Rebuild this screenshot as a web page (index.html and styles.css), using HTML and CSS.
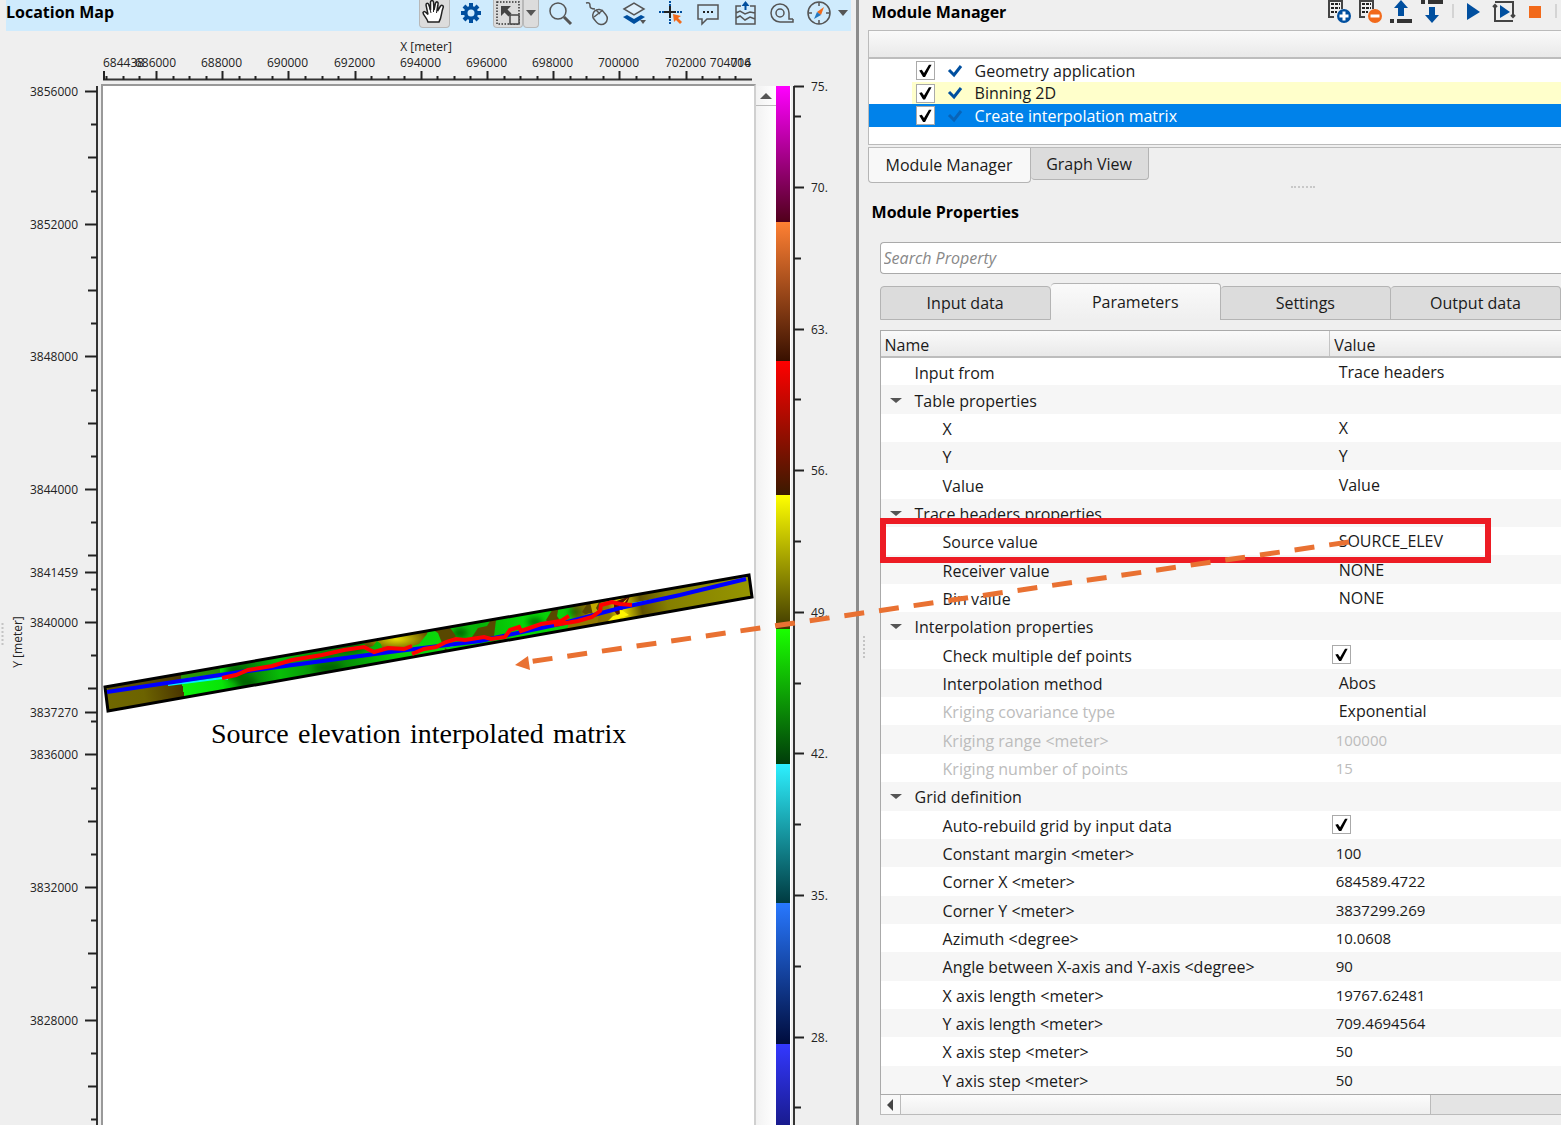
FILE: index.html
```html
<!DOCTYPE html>
<html lang="en">
<head>
    <meta charset="UTF-8">
    <meta name="viewport" content="width=device-width, initial-scale=1.0">
    <title>Location Map</title>
    <link rel="stylesheet" href="styles.css">
</head>
<body>

<div class="app">
    <!-- Location map -->
    <section class="map-panel">
        <div class="map-header">
            <h2>Location Map</h2>
            <div class="map-tools">
                <button class="tool pressed" aria-label="Pan">
                    <svg width="28" height="28" viewBox="0 0 28 28"><path d="M8 23 C7 19 3 16 3 13.500 C4 11.500 6 13 8 15.500 L6 6 C6 3.500 8 3.500 9 6 L10.500 11 L10.500 3 C11 1 13 1 13.500 3 L14 11 L15.500 4 C16.500 2 18.500 3 18 5 L17.500 12 L20.500 7 C22 5.500 24 7 23 9 C21 14 22 18 19 23 Z" fill="#fff" stroke="#222" stroke-width="1.500"/><path d="M9 6l2 8M13.500 4v9M17.500 6l-1 8" stroke="#222" fill="none"/></svg>
                </button>
                <button class="tool" aria-label="Settings">
                    <svg width="24" height="24" viewBox="0 0 24 24"><g stroke="#004f9f" stroke-width="4"><path d="M12 2v20M2 12h20M5 5l14 14M19 5L5 19"/></g><circle cx="12" cy="12" r="7" fill="#004f9f"/><circle cx="12" cy="12" r="3.500" fill="#cfebfd"/></svg>
                </button>
                <button class="tool pressed select-tool" aria-label="Select">
                    <svg width="26" height="26" viewBox="0 0 26 26"><rect x="2" y="2" width="22" height="22" fill="none" stroke="#333" stroke-width="1.500" stroke-dasharray="1.500 1.500"/><path d="M6 6h10l-3.500 3.500 4 4-3 3-4-4L6 16z" fill="#444"/><rect x="15" y="15" width="9" height="9" fill="#ddd" stroke="#444" stroke-width="1.500"/></svg>
                </button>
                <button class="tool pressed drop" aria-label="Select options">
                    <svg width="12" height="8" viewBox="0 0 12 8"><path d="M1 1h10L6 7z" fill="#555"/></svg>
                </button>
                <button class="tool" aria-label="Zoom">
                    <svg width="26" height="26" viewBox="0 0 26 26" fill="none" stroke="#555"><circle cx="11" cy="11" r="8" stroke-width="1.500"/><path d="M17 17l7 7" stroke-width="3"/></svg>
                </button>
                <button class="tool" aria-label="Mouse">
                    <svg width="26" height="26" viewBox="0 0 26 26" fill="none" stroke="#555" stroke-width="1.500"><path d="M2 3c4-1 4 1 4 3s2 3 5 3"/><rect x="10" y="9" width="12" height="16" rx="6" transform="rotate(-40 16 17)"/><path d="M10 17l9-7M12 10l4 4"/></svg>
                </button>
                <button class="tool" aria-label="Layers">
                    <svg width="26" height="26" viewBox="0 0 26 26"><path d="M2 17l4-2 7 4 7-4 4 2-11 7z" fill="#004f9f"/><path d="M3 9l10-6 10 6-10 6z" fill="#dff1fd" stroke="#555" stroke-width="1.500"/><path d="M19 20h6l-3 4z" fill="#555"/></svg>
                </button>
                <button class="tool" aria-label="Pick point">
                    <svg width="26" height="26" viewBox="0 0 26 26"><path d="M12 1v24M1 12h24" stroke="#004f9f" stroke-width="2" stroke-dasharray="2 1"/><path d="M12 6v12M6 12h12" stroke="#222" stroke-width="2"/><path d="M15 14l8 2-3 2 4 4-2 2-4-4-2 2z" fill="#f26a1b"/></svg>
                </button>
                <button class="tool" aria-label="Comment">
                    <svg width="26" height="26" viewBox="0 0 26 26"><path d="M3 5h20v14H12l-5 5v-5H3z" fill="none" stroke="#555" stroke-width="1.500"/><path d="M8 11h2v2H8zM12 11h2v2h-2zM16 11h2v2h-2z" fill="#222"/></svg>
                </button>
                <button class="tool" aria-label="Export map">
                    <svg width="26" height="26" viewBox="0 0 26 26" fill="none" stroke="#555" stroke-width="1.500"><path d="M9 6H4v18h19V6h-5M4 13l4-2 5 3 5-2 5 1M4 18l4-2 5 4 5-3 5 2"/><path d="M13.500 1l4 5h-3v4h-2V6h-3z" fill="#004f9f" stroke="none"/></svg>
                </button>
                <button class="tool" aria-label="Measure">
                    <svg width="26" height="26" viewBox="0 0 26 26" fill="none" stroke="#555" stroke-width="1.500"><path d="M24 19v3H11a9 9 0 1 1 9-9v6h4"/><circle cx="11" cy="13" r="4"/></svg>
                </button>
                <button class="tool compass" aria-label="Compass">
                    <svg width="26" height="26" viewBox="0 0 26 26"><circle cx="13" cy="13" r="11" fill="none" stroke="#555" stroke-width="1.500"/><path d="M13 2v4M13 20v4M2 13h4M20 13h4" stroke="#555" stroke-width="1.500"/><path d="M18 7l-3 8-4-3z" fill="#f26a1b"/><path d="M8 19l3-7 4 3z" fill="#2478c0"/></svg>
                </button>
                <button class="tool drop last" aria-label="Compass options">
                    <svg width="12" height="8" viewBox="0 0 12 8"><path d="M1 1h10L6 7z" fill="#555"/></svg>
                </button>
            </div>
        </div>

        <div class="map-body">
            <svg class="x-axis" aria-label="X axis">
                <g id="xAxis" transform="translate(-101 -31)">
                    <text x="426" y="51" text-anchor="middle">X [meter]</text>
                    <path d="M103 79.500H752" class="axis-line"/>
                </g>
            </svg>
            <svg class="y-axis" aria-label="Y axis">
                <g id="yAxis" transform="translate(0 -84)">
                    <text transform="translate(22 642) rotate(-90)" text-anchor="middle">Y [meter]</text>
                    <path d="M97 86V3000" class="axis-line"/>
                    <path d="M2.500 623v24" class="grip"/>
                </g>
            </svg>
            <div class="plot">
                <svg>
                    <defs>
                        <clipPath id="band"><path d="M105 687L749 575l3 22L108 711z"/></clipPath>
                        <linearGradient id="bandFill" gradientUnits="userSpaceOnUse" x1="105" y1="700" x2="751" y2="586">
                            <stop offset="0" stop-color="#706800"/>
                            <stop offset=".06" stop-color="#6c6300"/>
                            <stop offset=".12" stop-color="#4a3500"/>
                            <stop offset=".12" stop-color="#0cf20c"/>
                            <stop offset=".18" stop-color="#08e408"/>
                            <stop offset=".22" stop-color="#077a07"/>
                            <stop offset=".27" stop-color="#08bd08"/>
                            <stop offset=".35" stop-color="#087f08"/>
                            <stop offset=".4" stop-color="#06a506"/>
                            <stop offset=".45" stop-color="#08cf08"/>
                            <stop offset=".53" stop-color="#0bd90b"/>
                            <stop offset=".58" stop-color="#08b108"/>
                            <stop offset=".65" stop-color="#06d906"/>
                            <stop offset=".72" stop-color="#0bcd0b"/>
                            <stop offset=".73" stop-color="#776800"/>
                            <stop offset=".78" stop-color="#8c7600"/>
                            <stop offset=".8" stop-color="#eee200"/>
                            <stop offset=".83" stop-color="#605200"/>
                            <stop offset=".87" stop-color="#857f00"/>
                            <stop offset="1" stop-color="#969600"/>
                        </linearGradient>
                        <radialGradient id="hill"><stop offset="0" stop-color="#e8e000"/><stop offset="1" stop-color="#665300"/></radialGradient>
                        <filter id="soft"><feGaussianBlur stdDeviation="3"/></filter>
                    </defs>
                    <g transform="translate(-103 -86)">
                        <g clip-path="url(#band)">
                            <path d="M105 687L749 575l3 22L108 711z" fill="url(#bandFill)"/>
                            <g filter="url(#soft)" fill="#036503">
                                <ellipse cx="236" cy="672" rx="10" ry="8"/><ellipse cx="247" cy="683" rx="9" ry="6"/>
                                <ellipse cx="350" cy="648" rx="14" ry="5"/><ellipse cx="328" cy="668" rx="15" ry="5"/>
                                <ellipse cx="460" cy="633" rx="8" ry="5"/><ellipse cx="535" cy="622" rx="8" ry="4"/>
                                <ellipse cx="575" cy="612" rx="7" ry="3"/>
                            </g>
                            <path d="M364 643l3 5 6-2 4-5 4 3 2 7 12-1 14-3 10-3 8-10 2-7-45 7z" fill="url(#hill)"/>
                            <g fill="#594800">
                                <path d="M430 628l8 5 4 10 8-1 6-6-5-7-5-5zM472 637l6-9 9-2 5-8 4 2-2 16-10 3zM546 620l8-13 5-2-2 11 4 6-10 4zM582 612l7-11 12-3-1 10-11 9zM445 648l6 4 12-2 8 6-28 4z"/>
                            </g>
                            <path d="M569 622l20-9 10 1-2 12-30 4z" fill="#927a00"/>
                            <path d="M590 602l10-2-4 8 3 5-6 2z" fill="#c0a900"/>
                            <path d="M614 602l16-6-3 7-9 13-4-5z" fill="#5b1500"/>
                            <path d="M628 598l-8 11 9 6-9 3-5 7-8-3 6-6 7-2-1-8z" fill="#fff300"/>
                            <path d="M108 689L190 675l30-4" stroke="#4a3b00" stroke-width="5" opacity=".5"/>
                        </g>
                        <path d="M105 687L749 575l3 22L108 711z" fill="none" stroke="#000" stroke-width="3"/>
                        <path d="M168 685l55-7 5 1M450 646l25-6M560 624l15-4M632 604l50-9" stroke="#00f0ff" stroke-width="2" fill="none"/>
                        <path d="M107 692L240 672 390 652 480 641 560 624 620 608 680 595 746 579" fill="none" stroke="#00f" stroke-width="4"/>
                        <path d="M222 678l14-3 12-5 24-4 20-6 30-5 22-5 20-3 10 5 14-4 16 1 8-3M412 654l12-5 12-2 10-5 10-3 9 1 19-3 7 2 14-2 5-7 9-3 2 4 20-7 20-3 8-5M554 625l12-2 12-2 14-4 8-6 1-6 11-3 8 2 12 1" fill="none" stroke="#f00" stroke-width="4"/>
                        <text class="caption" x="211" y="743">Source&emsp13;elevation&emsp13;interpolated&emsp13;matrix</text>
                    </g>
                </svg>
            </div>
            <div class="v-scroll">
                <button aria-label="Scroll up"><svg width="12" height="6" viewBox="0 0 12 6"><path d="M0 6L6 0l6 6z" fill="#555"/></svg></button>
            </div>
            <div class="color-bar">
                <div class="band-magenta"></div>
                <div class="band-orange"></div>
                <div class="band-red"></div>
                <div class="band-yellow"></div>
                <div class="band-green"></div>
                <div class="band-cyan"></div>
                <div class="band-blue"></div>
                <div class="band-indigo"></div>
            </div>
            <svg class="color-scale" aria-label="Elevation scale">
                <g id="colorScale" transform="translate(-791 -84)">
                    <path d="M794 86V3000" class="axis-line"/>
                </g>
            </svg>
        </div>
    </section>

    <!-- Modules -->
    <section class="side-panel">
        <div class="side-header">
            <h2>Module Manager</h2>
            <div class="module-tools">
                <button aria-label="Add module"><svg width="24" height="24" viewBox="0 0 24 24"><path d="M7 17H2V1h13v8" fill="none" stroke="#444" stroke-width="2"/><path d="M4 4h9M4 8h9M4 12h6" stroke="#222" stroke-width="2" stroke-dasharray="3 1"/><circle cx="17" cy="16" r="7" fill="#004f9f"/><path d="M12.500 16h9M17 11.500v9" stroke="#fff" stroke-width="3"/></svg></button>
                <button aria-label="Remove module"><svg width="24" height="24" viewBox="0 0 24 24"><path d="M7 17H2V1h13v8" fill="none" stroke="#444" stroke-width="2"/><path d="M4 4h9M4 8h9M4 12h6" stroke="#222" stroke-width="2" stroke-dasharray="3 1"/><circle cx="17" cy="16" r="7" fill="#f26a1b"/><path d="M12.500 16h9" stroke="#fff" stroke-width="3"/></svg></button>
                <button aria-label="Move up"><svg width="24" height="24" viewBox="0 0 24 24"><path d="M12 0l7 8h-4v8H9V8H5z" fill="#004f9f"/><path d="M1 19h4v4H1zM8 19h15v4H8z" fill="#333"/></svg></button>
                <button aria-label="Move down"><svg width="24" height="24" viewBox="0 0 24 24"><path d="M12 23l7-8h-4V7H9v8H5z" fill="#004f9f"/><path d="M1 0h4v4H1zM8 0h15v4H8z" fill="#333"/></svg></button>
                <span class="separator"></span>
                <button aria-label="Run"><svg width="24" height="24" viewBox="0 0 24 24"><path d="M6 3l13 9-13 8z" fill="#004f9f"/></svg></button>
                <button aria-label="Run flow"><svg width="24" height="24" viewBox="0 0 24 24"><path d="M1 7l2-2 2 2M19 15l2 2 2-2" fill="none" stroke="#444" stroke-width="2"/><path d="M3 2h18v14M3 6v15h18" fill="none" stroke="#444" stroke-width="2"/><path d="M8 5l10 7-10 6z" fill="#004f9f"/></svg></button>
                <button aria-label="Stop"><svg width="24" height="24" viewBox="0 0 24 24"><path d="M6 6h12v12H6z" fill="#f26a1b"/></svg></button>
                <span class="separator"></span>
            </div>
        </div>

        <div class="module-list">
            <div class="list-header"></div>
            <label class="module"><input type="checkbox" checked><svg class="done" width="16" height="14" viewBox="0 0 16 14"><path d="M2 6l5 5 7-9" /></svg>Geometry application</label>
            <label class="module warm"><input type="checkbox" checked><svg class="done" width="16" height="14" viewBox="0 0 16 14"><path d="M2 6l5 5 7-9" /></svg>Binning 2D</label>
            <label class="module selected"><input type="checkbox" checked><svg class="done" width="16" height="14" viewBox="0 0 16 14"><path d="M2 6l5 5 7-9" /></svg>Create interpolation matrix</label>
        </div>
        <div class="view-tabs">
            <button class="active">Module Manager</button>
            <button>Graph View</button>
        </div>
        <div class="splitter"></div>

        <h2 class="properties-title">Module Properties</h2>
        <div class="properties">
            <input type="text" class="search" placeholder="Search Property" aria-label="Search Property">
            <div class="property-tabs">
                <button>Input data</button>
                <button class="active">Parameters</button>
                <button>Settings</button>
                <button>Output data</button>
            </div>
            <div class="table-wrap">
                <table>
                    <thead>
                        <tr><th>Name</th><th>Value</th></tr>
                    </thead>
                    <tbody>
                        <tr><td>Input from</td><td>Trace headers</td></tr>
                        <tr class="group"><td>Table properties</td><td></td></tr>
                        <tr class="child"><td>X</td><td>X</td></tr>
                        <tr class="child"><td>Y</td><td>Y</td></tr>
                        <tr class="child"><td>Value</td><td>Value</td></tr>
                        <tr class="group"><td>Trace headers properties</td><td></td></tr>
                        <tr class="child"><td>Source value</td><td>SOURCE_ELEV</td></tr>
                        <tr class="child"><td>Receiver value</td><td>NONE</td></tr>
                        <tr class="child"><td>Bin value</td><td>NONE</td></tr>
                        <tr class="group"><td>Interpolation properties</td><td></td></tr>
                        <tr class="child check"><td><label for="multiple">Check multiple def points</label></td><td><input type="checkbox" id="multiple" checked></td></tr>
                        <tr class="child"><td>Interpolation method</td><td>Abos</td></tr>
                        <tr class="child off"><td>Kriging covariance type</td><td class="on">Exponential</td></tr>
                        <tr class="child off number"><td>Kriging range &lt;meter&gt;</td><td>100000</td></tr>
                        <tr class="child off number"><td>Kriging number of points</td><td>15</td></tr>
                        <tr class="group"><td>Grid definition</td><td></td></tr>
                        <tr class="child check"><td><label for="rebuild">Auto-rebuild grid by input data</label></td><td><input type="checkbox" id="rebuild" checked></td></tr>
                        <tr class="child number"><td>Constant margin &lt;meter&gt;</td><td>100</td></tr>
                        <tr class="child number"><td>Corner X &lt;meter&gt;</td><td>684589.4722</td></tr>
                        <tr class="child number"><td>Corner Y &lt;meter&gt;</td><td>3837299.269</td></tr>
                        <tr class="child number"><td>Azimuth &lt;degree&gt;</td><td>10.0608</td></tr>
                        <tr class="child number"><td>Angle between X-axis and Y-axis &lt;degree&gt;</td><td>90</td></tr>
                        <tr class="child number"><td>X axis length &lt;meter&gt;</td><td>19767.62481</td></tr>
                        <tr class="child number"><td>Y axis length &lt;meter&gt;</td><td>709.4694564</td></tr>
                        <tr class="child number"><td>X axis step &lt;meter&gt;</td><td>50</td></tr>
                        <tr class="child number"><td>Y axis step &lt;meter&gt;</td><td>50</td></tr>
                    </tbody>
                </table>
            </div>
            <div class="h-scroll">
                <button aria-label="Scroll left"><svg width="6" height="12" viewBox="0 0 6 12"><path d="M6 0L0 6l6 6z" fill="#444"/></svg></button>
                <div class="thumb"></div>
            </div>
        </div>
    </section>

    <!-- Callout from the source value to the map -->
    <svg class="callout">
        <rect x="883" y="521" width="605" height="39" fill="none" stroke="#ed1c24" stroke-width="6"/>
        <path d="M1349 542L531 661.500" stroke="#e97132" stroke-width="5" stroke-dasharray="20 15"/>
        <path d="M515 665l13-9 2 14z" fill="#e97132"/>
        <path d="M864 636v24" class="grip"/>
    </svg>
</div>

<script>
    var SVG_NS = "http://www.w3.org/2000/svg";

    function addLine(parent, x1, y1, x2, y2) {
        var line = document.createElementNS(SVG_NS, "path");
        line.setAttribute("d", "M" + x1 + " " + y1 + "L" + x2 + " " + y2);
        line.setAttribute("class", "tick");
        parent.appendChild(line);
    }

    function addLabel(parent, text, x, y, anchor) {
        var label = document.createElementNS(SVG_NS, "text");
        label.setAttribute("x", x);
        label.setAttribute("y", y);
        label.setAttribute("text-anchor", anchor);
        label.textContent = text;
        parent.appendChild(label);
    }

    // X axis: a label every 2000 m, four steps between labels
    var xAxis = document.getElementById("xAxis");
    for (var i = -3; i <= 35; i++) {
        var x = Math.round(156 + i * 16.55) + 0.5;
        addLine(xAxis, x, i % 4 === 0 ? 71 : 76, x, 80);
        if (i % 4 === 0) {
            addLabel(xAxis, 686000 + i * 500, x - 1, 67, "middle");
        }
    }
    addLine(xAxis, 104, 71, 104, 80);
    addLabel(xAxis, "684438", 103, 67, "start");
    addLabel(xAxis, "704016", 751, 67, "end");
    addLabel(xAxis, "704", 751, 67, "end");

    // Y axis: a label every 4000 m
    var yAxis = document.getElementById("yAxis");
    for (var j = 0; j < 32; j++) {
        var y = Math.round(91 + j * 33.17) + 0.5;
        addLine(yAxis, j % 4 === 0 ? 85 : j % 2 === 0 ? 88 : 91, y, 97, y);
        if (j % 4 === 0) {
            addLabel(yAxis, 3856000 - j * 1000, 78, y + 4, "end");
        }
    }
    [[3841459, 572.5], [3837270, 712.5]].forEach(function (mark) {
        addLine(yAxis, 85, mark[1], 97, mark[1]);
        addLabel(yAxis, mark[0], 78, mark[1] + 4, "end");
    });

    // Colour scale
    var colorScale = document.getElementById("colorScale");
    addLine(colorScale, 794, 86.5, 804, 86.5);
    addLabel(colorScale, "75.", 811, 91, "start");
    addLine(colorScale, 794, 116.5, 801, 116.5);
    for (var k = 0; k < 14; k++) {
        var s = Math.round(187 + k * 70.8) + 0.5;
        addLine(colorScale, 794, s, k % 2 === 0 ? 804 : 801, s);
        if (k % 2 === 0) {
            addLabel(colorScale, (70 - k * 3.5) + ".", 811, s + 4, "start");
        }
    }
</script>

</body>
</html>
```
FILE: styles.css
```css
* {
    box-sizing: border-box;
}
body {
    margin: 0;
    background-color: #efefef;
    color: #1a1a1a;
    font-family: "Open Sans", "Noto Sans", sans-serif;
    font-size: 16px;
}
button {
    font: inherit;
    color: inherit;
    padding: 0;
    border: none;
    background: none;
}
h2 {
    margin: 0;
    font-size: 16px;
    line-height: 24px;
    color: #000;
}
svg {
    display: block;
}
.app {
    position: relative;
    display: grid;
    grid-template-columns: 55fr 45fr;
    height: 100vh;
    min-height: 900px;
    overflow: hidden;
}

/* Map */
.map-panel {
    display: flex;
    flex-direction: column;
    min-width: 0;
    min-height: 0;
    border-right: 3px solid #8c8c8c;
}
.map-header {
    display: flex;
    justify-content: space-between;
    height: 31px;
    margin: 0 5px 0 6px;
    background-color: #cfebfd;
}
.map-tools {
    display: flex;
}
.tool {
    display: flex;
    align-items: center;
    justify-content: center;
    width: 31px;
    height: 28px;
    margin-right: 6px;
    padding-bottom: 2px;
}
.tool.pressed {
    background-color: #dcdcdc;
    border: 1px solid #b8b8b8;
    border-top: none;
    border-radius: 0 0 4px 4px;
}
.tool.select-tool {
    width: 30px;
    margin-right: 0;
}
.tool.drop {
    width: 16px;
}
.tool.compass,
.tool.last {
    margin: 0;
}
.map-body {
    flex: 1;
    display: grid;
    grid-template-columns: 101px 1fr 20px 15px 65px;
    grid-template-rows: 53px 1fr;
    min-height: 0;
}
.map-body svg {
    width: 100%;
    height: 100%;
    font-size: 12px;
    fill: #222;
}
.map-body .x-axis {
    grid-column: 2;
    grid-row: 1;
}
.y-axis,
.plot,
.v-scroll,
.color-bar,
.color-scale {
    grid-row: 2;
}
.color-scale {
    overflow: visible;
}
.axis-line {
    stroke: #333;
    stroke-width: 2;
}
.tick {
    stroke: #222;
    stroke-width: 2;
}
.grip {
    stroke: #c4c4c4;
    stroke-width: 2;
    stroke-dasharray: 2 2;
}
.plot {
    min-height: 0;
    background-color: #fff;
    border: 2px solid #999;
    border-right-color: #d0d0d0;
    border-bottom: none;
}
.map-body .caption {
    font-family: "Liberation Serif", serif;
    font-size: 28px;
    fill: #000;
}
.v-scroll {
    margin-top: 2px;
    background: linear-gradient(to right, #f2f2f2, #fff);
}
.v-scroll button {
    display: flex;
    align-items: center;
    justify-content: center;
    width: 100%;
    height: 20px;
    border-bottom: 1px solid #bbb;
}
.v-scroll button svg {
    width: 12px;
    height: 6px;
}
.color-bar {
    display: flex;
    flex-direction: column;
    min-height: 0;
    margin-top: 2px;
    border-right: 1px solid #fff;
    overflow: hidden;
}
.color-bar div {
    flex: none;
    height: 139px;
}
.color-bar .band-magenta {
    height: 136px;
    background: linear-gradient(#ff00ff, #50001a);
}
.color-bar .band-orange {
    background: linear-gradient(#ff8033, #381000);
}
.color-bar .band-red {
    height: 134px;
    background: linear-gradient(#ff0000, #3a1a00);
}
.color-bar .band-yellow {
    height: 134px;
    background: linear-gradient(#ffff00, #403a00);
}
.color-bar .band-green {
    height: 135px;
    background: linear-gradient(#1aff00, #003c0a);
}
.color-bar .band-cyan {
    background: linear-gradient(#2df0ff, #003a40);
}
.color-bar .band-blue {
    height: 141px;
    background: linear-gradient(#2878ff, #000c3c);
}
.color-bar .band-indigo {
    background: linear-gradient(#3338ff, #06063c);
}

/* Module manager */
.side-panel {
    display: flex;
    flex-direction: column;
    min-width: 0;
    min-height: 0;
    padding-left: 9px;
}
.side-header {
    display: flex;
    justify-content: space-between;
    height: 30px;
    padding: 0 4px;
}
.module-tools {
    display: flex;
    gap: 7px;
}
.module-tools button {
    width: 24px;
    height: 24px;
}
.separator {
    width: 2px;
    height: 14px;
    margin: 4px 0 0 1px;
    background-color: #d4d4d4;
}
.module-list {
    height: 115px;
    background-color: #fff;
    border: 1px solid #bbb;
    border-right: none;
}
.list-header {
    height: 28px;
    background: linear-gradient(#fafafa, #e9e9e9);
    border-bottom: 2px solid #bdbdbd;
}
.module {
    display: flex;
    align-items: center;
    height: 23px;
    padding-left: 47px;
}
.module.warm {
    height: 22px;
    background: linear-gradient(to right, #fff 43px, #ffffcb 43px);
}
.module.selected {
    background-color: #0082ea;
    color: #fff;
}
.done {
    margin: 0 12px;
    fill: none;
    stroke: #004f9f;
    stroke-width: 3;
}
.selected .done {
    stroke: #0864b8;
}
input[type="checkbox"] {
    appearance: none;
    position: relative;
    flex: none;
    display: block;
    width: 19px;
    height: 19px;
    margin: 0;
    background-color: #fff;
    border: 1px solid #aaa;
}
input[type="checkbox"]:checked::after {
    content: "";
    position: absolute;
    inset: 2px;
    background-color: #000;
    clip-path: polygon(5% 50%, 25% 45%, 42% 70%, 80% 5%, 100% 5%, 50% 100%, 35% 100%);
}
.view-tabs {
    display: flex;
    align-items: flex-start;
    height: 39px;
    margin-top: 2px;
    border-top: 1px solid #bbb;
}
.view-tabs button {
    width: 118px;
    height: 32px;
    background-color: #dcdcdc;
    border: 1px solid #b4b4b4;
    border-top: none;
    border-left: none;
    border-radius: 0 0 4px 4px;
}
.view-tabs .active {
    width: 163px;
    height: 35px;
    background-color: #f8f8f8;
    border-left: 1px solid #b4b4b4;
}
.splitter {
    width: 24px;
    margin: 0 auto 0 61%;
    border-top: 2px dotted #c8c8c8;
}
.properties-title {
    margin-top: 12px;
    padding-left: 4px;
}
.properties {
    flex: 1;
    display: flex;
    flex-direction: column;
    min-height: 0;
    padding: 18px 0 10px 12px;
}
.search {
    height: 32px;
    flex: none;
    padding: 0 3px;
    font: inherit;
    font-style: italic;
    background-color: #fff;
    border: 1px solid #aaa;
    border-right: none;
    border-radius: 4px 0 0 4px;
}
.search::placeholder {
    color: #888;
}
.property-tabs {
    display: flex;
    align-items: flex-end;
    margin: 9px 0 10px;
}
.property-tabs button {
    flex: 1;
    height: 34px;
    background-color: #dcdcdc;
    border: 1px solid #b4b4b4;
    border-left: none;
    border-radius: 4px 4px 0 0;
}
.property-tabs button:first-child {
    border-left: 1px solid #b4b4b4;
}
.property-tabs .active {
    height: 37px;
    background: linear-gradient(#fafafa, #efefef);
    border-bottom: none;
}
.table-wrap {
    flex: 1;
    min-height: 0;
    border: 1px solid #aaa;
    border-right: none;
}
table {
    width: 100%;
    height: 100%;
    border-collapse: collapse;
    table-layout: fixed;
    background-color: #fff;
}
th, td {
    height: 26px;
    padding: 2px 0 0 9px;
    line-height: 20px;
    text-align: left;
    white-space: nowrap;
    font-weight: normal;
}
th {
    padding-left: 4px;
    background: linear-gradient(#fafafa, #e9e9e9);
    border-bottom: 2px solid #bdbdbd;
}
th:first-child {
    width: 66%;
    border-right: 1px solid #c4c4c4;
}
tbody tr:nth-child(even) {
    background-color: #f6f6f6;
}
td:first-child {
    padding-left: 34px;
}
td:last-child {
    padding-top: 0;
}
.child td:first-child {
    padding-left: 62px;
}
.group td:first-child::before {
    content: "";
    display: inline-block;
    margin: 0 13px 4px -25px;
    border: solid transparent;
    border-top-color: #555;
    border-width: 5px 6px 0;
}
.number td:last-child {
    padding-left: 6px;
    font-size: 15px;
}
.check td:last-child {
    padding: 0 0 0 2px;
}
.off td {
    color: #bcbcbc;
}
.off .on {
    color: #1a1a1a;
}
.h-scroll {
    display: flex;
    height: 20px;
    background-color: #e4e4e4;
    border: 1px solid #bbb;
    border-top: none;
    border-right: none;
}
.h-scroll button {
    display: flex;
    align-items: center;
    justify-content: center;
    width: 20px;
    background-color: #f8f8f8;
    border-right: 1px solid #bbb;
}
.thumb {
    width: 78%;
    background: linear-gradient(#fcfcfc, #efefef);
    border-right: 1px solid #bbb;
}

.callout {
    position: absolute;
    top: 0;
    left: 0;
    width: 100%;
    height: 100%;
    pointer-events: none;
}
```
